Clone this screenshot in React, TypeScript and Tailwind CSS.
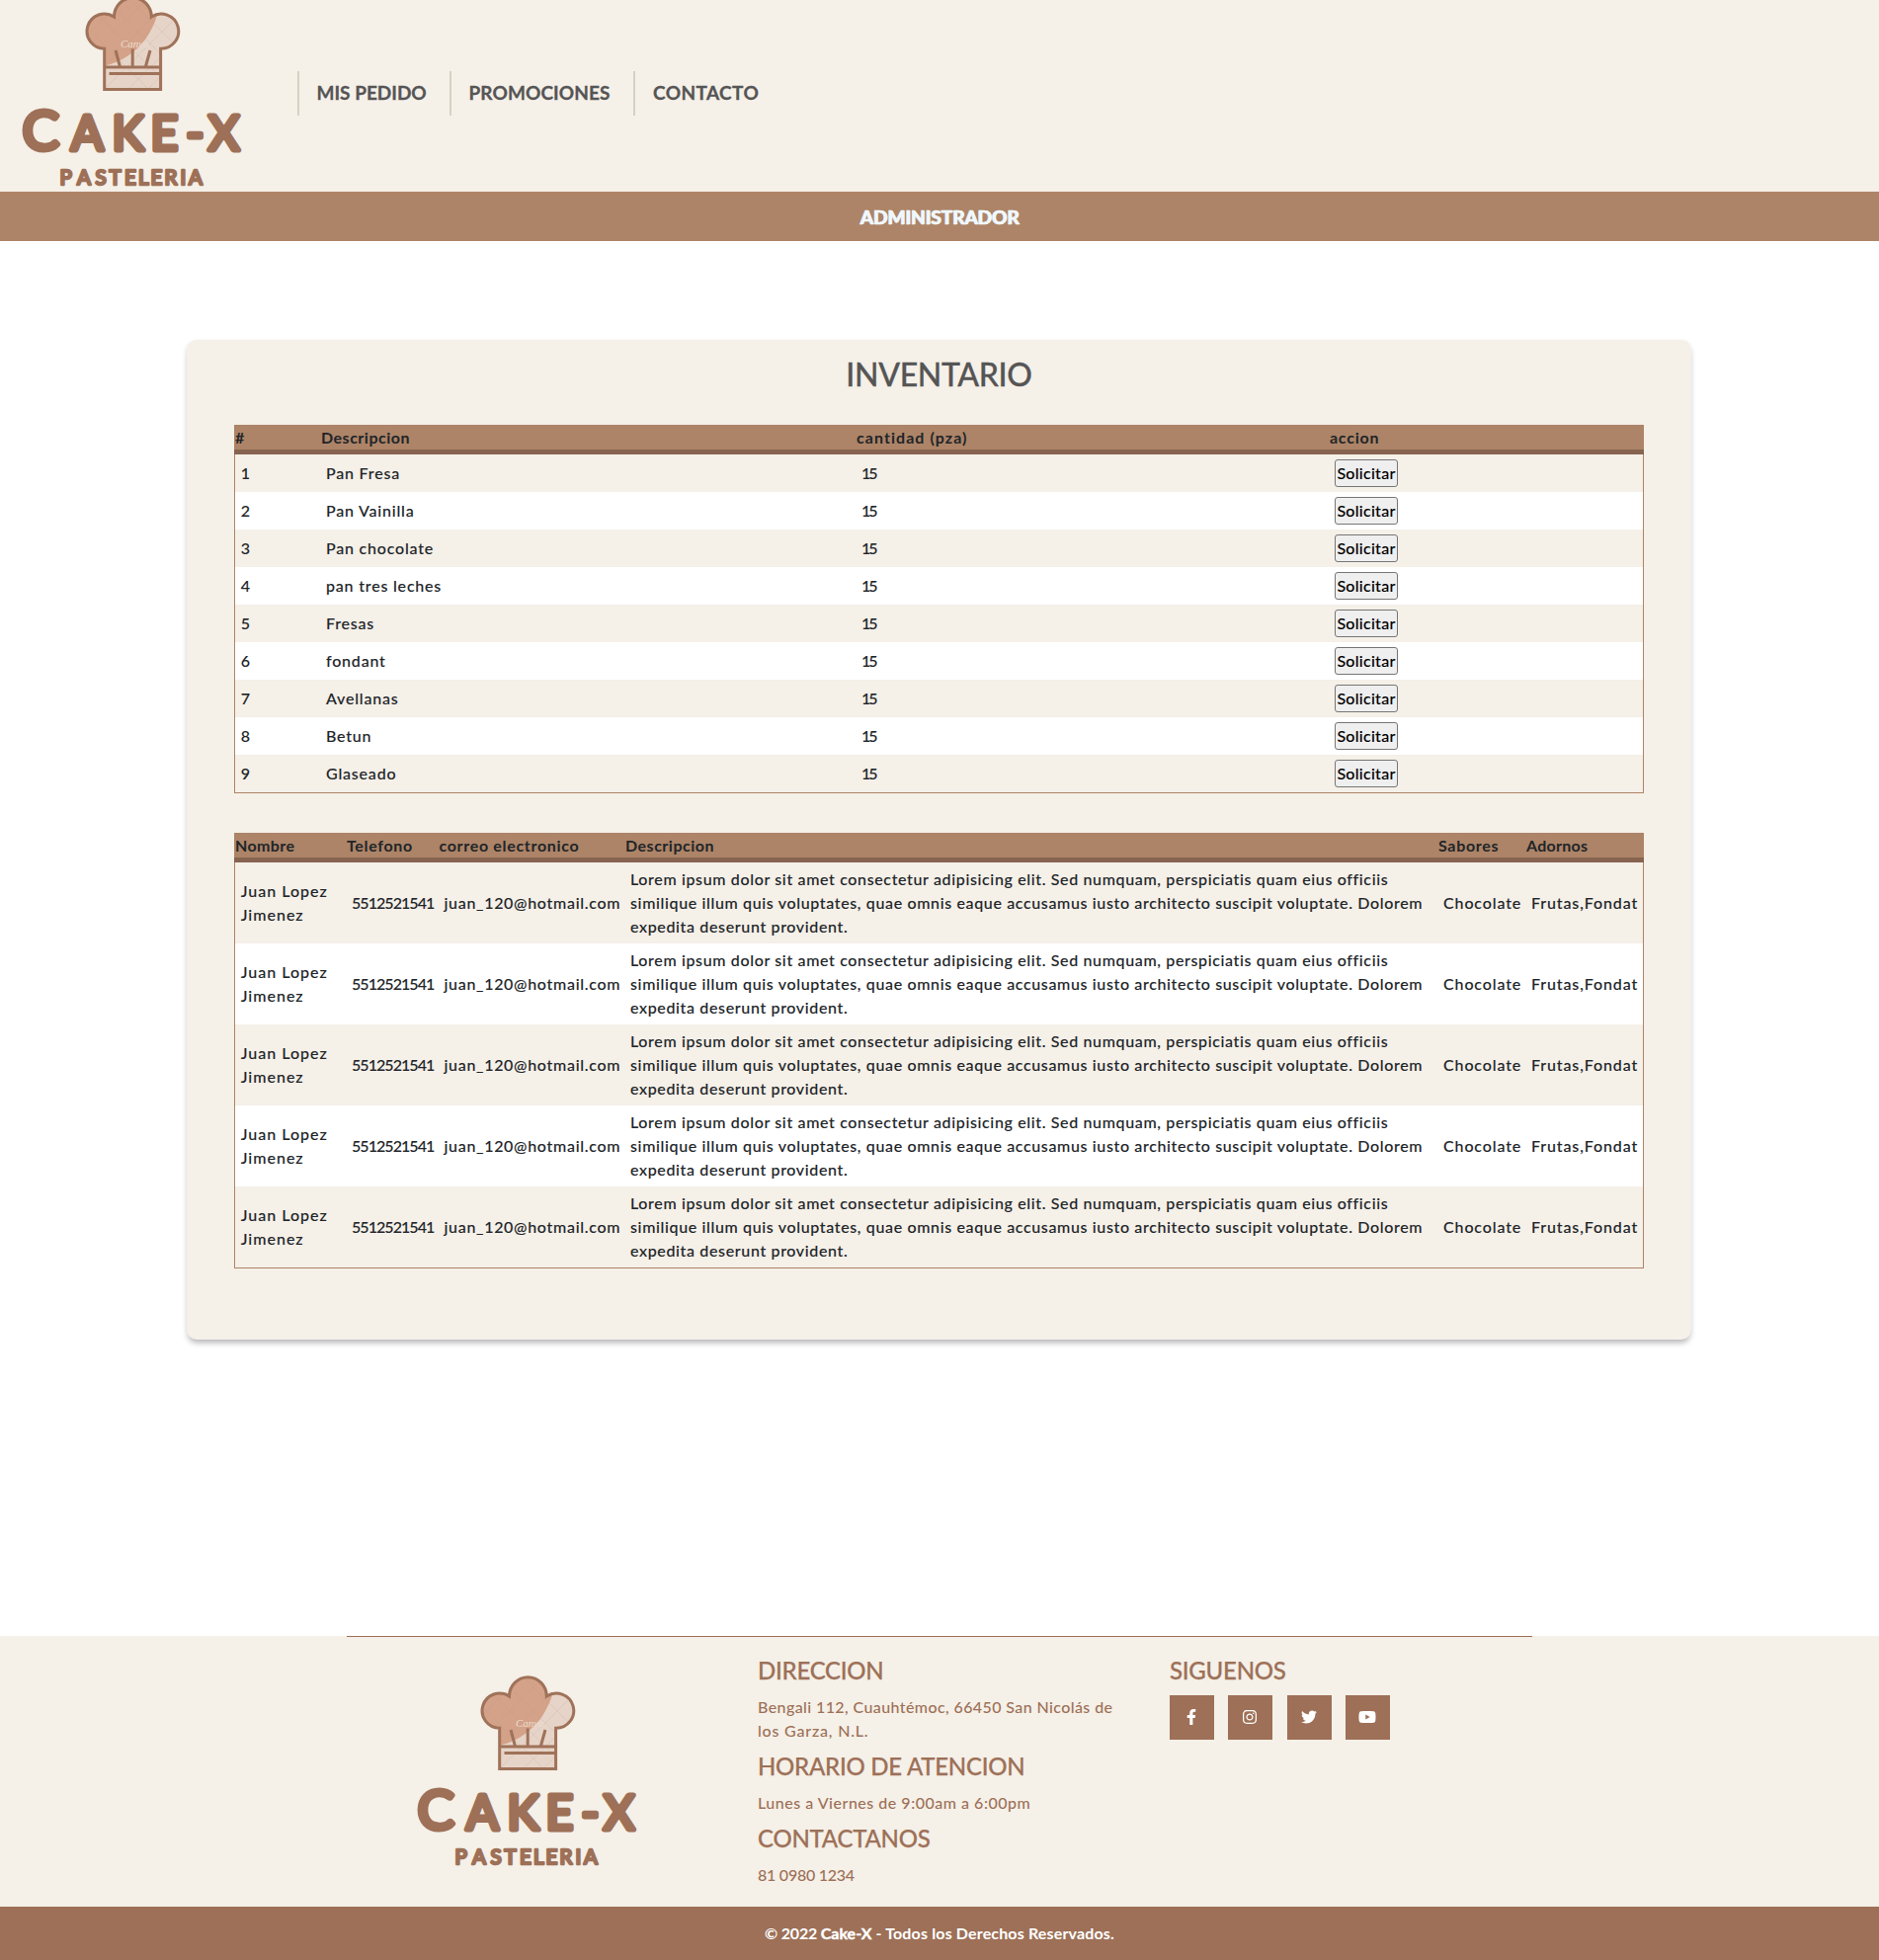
import React from 'react';
import { FaFacebookF, FaInstagram, FaTwitter, FaYoutube } from 'react-icons/fa';

const hatOutline = 'M105.700 49.200A17.600 17.600 0 1 1 115.500 17A18.900 19.200 0 0 1 153.300 17A17.600 17.600 0 1 1 162.600 49.200V90.500H105.700Z';

function Logo({ viewBox, className }: { viewBox: string; className: string }) {
  return (
    <svg viewBox={viewBox} className={className} aria-label="Cake-X Pasteleria">
      <defs>
        <clipPath id="hat">
          <path d={hatOutline} />
        </clipPath>
      </defs>
      <g clipPath="url(#hat)">
        <rect x="80" y="-10" width="110" height="105" fill="#e6d4c8" />
        <path d="M80 -10H165C163 8 156 28 146.500 40.500C137 52.500 124 63 104 67H80Z" fill="#d4a288" />
        <path
          d="M80 20L150 90M80 -4L174 90M100 -8L184 76M124 -8L184 52M148 -8L184 28M80 44L132 -8M80 68L156 -8M92 80L180 -8M106 90L184 12M130 90L184 36M150 90L184 56"
          stroke="#b9978a"
          strokeOpacity="0.18"
          strokeWidth="1"
          fill="none"
        />
      </g>
      <text x="122" y="48" fontSize="11" fontStyle="italic" fill="#ecdccf" className="font-['Liberation_Serif',serif]">
        Canva
      </text>
      <g fill="none" stroke="#9f7259" strokeWidth="3">
        <path d={hatOutline} />
        <path d="M106 68H162M110.500 74.500H162M117 51L121.300 67M134.200 49.500V67M152 51L147.500 67" />
      </g>
      <g fill="#9d7057" stroke="#9d7057" strokeLinejoin="round" strokeLinecap="round" className="font-[Lato,sans-serif] font-normal">
        <text x="22.500 72 113.500 152.500 188.500 211" y="148.500" fontSize="48" strokeWidth="5.200">
          <tspan y="152" fontSize="56">C</tspan>AKE-X
        </text>
        <text x="60.500 78 96.500 110.500 126 140 152.500 166.500 182.500 191" y="186.500" fontSize="20.500" strokeWidth="2.600">
          PASTELERIA
        </text>
      </g>
    </svg>
  );
}

const products = [
  'Pan Fresa',
  'Pan Vainilla',
  'Pan chocolate',
  'pan tres leches',
  'Fresas',
  'fondant',
  'Avellanas',
  'Betun',
  'Glaseado',
];

const description =
  'Lorem ipsum dolor sit amet consectetur adipisicing elit. Sed numquam, perspiciatis quam eius officiis similique illum quis voluptates, quae omnis eaque accusamus iusto architecto suscipit voluptate. Dolorem expedita deserunt provident.';

const tableClass =
  'w-[1427px] table-fixed border-separate border-spacing-0 text-left text-base text-[#212529] [&_th]:h-[30px] [&_th]:border-b-[5px] [&_th]:border-[#876450] [&_th]:bg-[#ad8467] [&_th]:p-0 [&_th]:font-bold [&_th]:leading-6 [&_th:first-child]:pl-px [&_td]:border-[#ad8467] [&_td]:p-[5px] [&_td:first-child]:border-l [&_td:first-child]:pl-[5.7px] [&_td:last-child]:border-r [&_tbody_tr:last-child_td]:border-b [&_tbody_tr:nth-child(even)]:bg-white [&_td]:[-webkit-text-stroke:0.1px]';

const footerTitle = 'h-[29px] text-[24px] leading-[29px] tracking-[-0.26px] [-webkit-text-stroke:0.25px_#9d7057]';

export default function App() {
  return (
    <div className="w-[1902px] bg-white font-[Lato,sans-serif] font-medium">
      <header className="flex h-[194px] bg-[#f5f0e8]">
        <Logo viewBox="0 0 260 194" className="block h-[194px] w-[260px]" />
        <nav className="mt-[72px] ml-[41px] flex text-[19px] font-bold text-[#555] [-webkit-text-stroke:0.3px_#555]">
          <a className="flex h-[45px] w-[154px] items-center border-l-2 border-[#d7d1c3] pl-[17.5px]">MIS PEDIDO</a>
          <a className="flex h-[45px] w-[186px] items-center border-l-2 border-[#d7d1c3] pl-[17.5px] tracking-[0.1px]">PROMOCIONES</a>
          <a className="flex h-[45px] items-center border-l-2 border-[#d7d1c3] pl-[18px] tracking-[0.4px]">CONTACTO</a>
        </nav>
      </header>
      <div className="flex h-[50px] items-center justify-center bg-[#ad8467] pt-[2px] text-[19px] font-bold text-[#f0f8ff] [-webkit-text-stroke:0.6px_#f0f8ff] [text-shadow:1px_0_0_#f0f8ff]">
        ADMINISTRADOR
      </div>

      <main className="mt-[100px] ml-[189px] h-[1012px] w-[1523px] rounded-[10px] bg-[#f5f0e8] px-12 pt-4 shadow-[0_5px_6px_-2px_rgba(0,0,0,0.26),0_2px_6px_rgba(50,50,93,0.08)]">
        <h2 className="mb-8 h-[38px] text-center text-[32px] leading-[38px] tracking-[-0.35px] text-[#555] [-webkit-text-stroke:0.3px_#555]">
          INVENTARIO
        </h2>
        <table className={tableClass}>
          <colgroup>
            <col className="w-[88px]" />
            <col className="w-[542px]" />
            <col className="w-[479px]" />
            <col className="w-[318px]" />
          </colgroup>
          <thead>
            <tr>
              <th>#</th>
              <th className="tracking-[0.5px]">Descripcion</th>
              <th className="tracking-[1.05px]">cantidad (pza)</th>
              <th className="tracking-[0.75px]">accion</th>
            </tr>
          </thead>
          <tbody>
            {products.map((name, i) => (
              <tr key={name}>
                <td>{i + 1}</td>
                <td className="tracking-[0.8px]">{name}</td>
                <td className="tracking-[-2px]">15</td>
                <td>
                  <button className="flex h-7 w-16 items-center justify-center rounded-[3px] border border-[#767676] bg-[#efefef] tracking-[0.27px] text-black">
                    Solicitar
                  </button>
                </td>
              </tr>
            ))}
          </tbody>
        </table>

        <table className={`mt-10 ${tableClass}`}>
          <colgroup>
            <col className="w-[114px]" />
            <col className="w-[93.5px]" />
            <col className="w-[188.5px]" />
            <col className="w-[823px]" />
            <col className="w-[89px]" />
            <col className="w-[119px]" />
          </colgroup>
          <thead>
            <tr>
              <th className="tracking-[0.4px]">Nombre</th>
              <th className="tracking-[0.65px]">Telefono</th>
              <th className="tracking-[0.68px]">correo electronico</th>
              <th className="tracking-[0.5px]">Descripcion</th>
              <th className="tracking-[0.69px]">Sabores</th>
              <th className="tracking-[0.27px]">Adornos</th>
            </tr>
          </thead>
          <tbody>
            {[0, 1, 2, 3, 4].map((i) => (
              <tr key={i}>
                <td className="tracking-[1px]">
                  Juan Lopez
                  <br />
                  Jimenez
                </td>
                <td className="tracking-[-0.95px]">5512521541</td>
                <td className="whitespace-nowrap tracking-[0.7px]">juan_120@hotmail.com</td>
                <td className="tracking-[0.64px]">{description}</td>
                <td className="tracking-[0.88px]">Chocolate</td>
                <td className="whitespace-nowrap tracking-[0.88px]">Frutas,Fondat</td>
              </tr>
            ))}
          </tbody>
        </table>
      </main>

      <footer className="mt-[300px] bg-[#f5f0e8] text-[#9d7057]">
        <div className="mx-auto flex h-[274px] w-[1200px] border-t border-[#9d7057]">
          <div className="w-[416px] pt-[33px] pl-[49px]">
            <Logo viewBox="0 -10 260 210" className="block h-[210px] w-[260px]" />
          </div>
          <div className="w-[417px] pt-[19px]">
            <h3 className={footerTitle}>DIRECCION</h3>
            <p className="mt-[11px] tracking-[0.4px]">
              Bengali 112, Cuauhtémoc, 66450 San Nicolás de
              <br />
              <span className="tracking-[0.8px]">los Garza, N.L.</span>
            </p>
            <h3 className={`mt-[9px] ${footerTitle}`}>HORARIO DE ATENCION</h3>
            <p className="mt-[11px] tracking-[0.51px]">Lunes a Viernes de 9:00am a 6:00pm</p>
            <h3 className={`mt-[9px] ${footerTitle}`}>CONTACTANOS</h3>
            <p className="mt-[11px] tracking-[-0.25px]">81 0980 1234</p>
          </div>
          <div className="pt-[19px]">
            <h3 className={footerTitle}>SIGUENOS</h3>
            <div className="mt-[11px] flex gap-x-[14.4px] text-white [&>a]:flex [&>a]:size-[45px] [&>a]:items-center [&>a]:justify-center [&>a]:bg-[#9d7057] [&>a]:pr-px [&>a]:pb-px">
              <a><FaFacebookF className="h-4 w-[10px]" /></a>
              <a><FaInstagram className="size-4" /></a>
              <a><FaTwitter className="size-4" /></a>
              <a><FaYoutube className="h-4 w-[18px]" /></a>
            </div>
          </div>
        </div>
        <div className="flex h-[54px] items-center justify-center bg-[#9d7057] font-bold whitespace-pre text-white">
          <span className="tracking-[-0.2px]">© 2022 </span>
          <span className="[-webkit-text-stroke:0.4px_white]">Cake-X</span>
          <span className="tracking-[0.15px]"> - Todos los Derechos Reservados.</span>
        </div>
      </footer>
    </div>
  );
}
